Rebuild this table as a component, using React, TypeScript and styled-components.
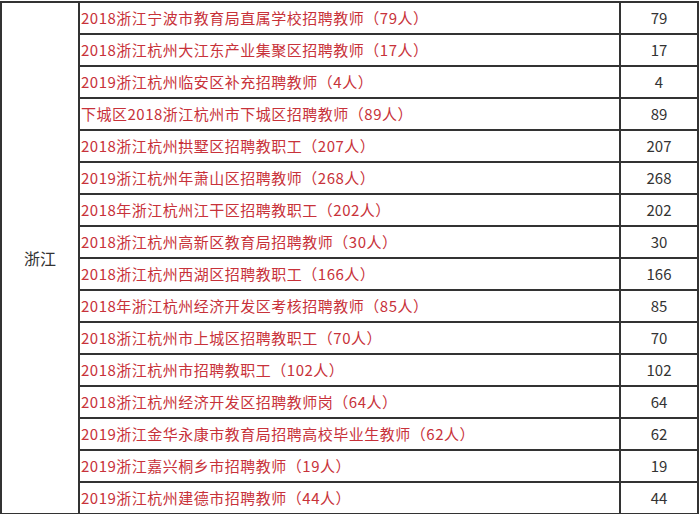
import React, { FC } from 'react'
import styled, { createGlobalStyle } from 'styled-components'

interface Row {
    title: string
    count: number
}

const rows: Row[] = [
    { title: '2018浙江宁波市教育局直属学校招聘教师（79人）', count: 79 },
    { title: '2018浙江杭州大江东产业集聚区招聘教师（17人）', count: 17 },
    { title: '2019浙江杭州临安区补充招聘教师（4人）', count: 4 },
    { title: '下城区2018浙江杭州市下城区招聘教师（89人）', count: 89 },
    { title: '2018浙江杭州拱墅区招聘教职工（207人）', count: 207 },
    { title: '2019浙江杭州年萧山区招聘教师（268人）', count: 268 },
    { title: '2018年浙江杭州江干区招聘教职工（202人）', count: 202 },
    { title: '2018浙江杭州高新区教育局招聘教师（30人）', count: 30 },
    { title: '2018浙江杭州西湖区招聘教职工（166人）', count: 166 },
    { title: '2018年浙江杭州经济开发区考核招聘教师（85人）', count: 85 },
    { title: '2018浙江杭州市上城区招聘教职工（70人）', count: 70 },
    { title: '2018浙江杭州市招聘教职工（102人）', count: 102 },
    { title: '2018浙江杭州经济开发区招聘教师岗（64人）', count: 64 },
    { title: '2019浙江金华永康市教育局招聘高校毕业生教师（62人）', count: 62 },
    { title: '2019浙江嘉兴桐乡市招聘教师（19人）', count: 19 },
    { title: '2019浙江杭州建德市招聘教师（44人）', count: 44 },
]

const App: FC = () => {
    return (
        <>
            <GlobalStyle />
            <Table>
                <Region rows={rows.length}>浙江</Region>
                {rows.map((r) => (
                    <React.Fragment key={r.title}>
                        <TitleCell>
                            <Link href="#">{r.title}</Link>
                        </TitleCell>
                        <CountCell>{r.count}</CountCell>
                    </React.Fragment>
                ))}
            </Table>
        </>
    )
}
export default App

const GlobalStyle = createGlobalStyle`
    body {
        margin: 0;
        background: #fff;
        font-family: "Noto Sans CJK SC", "Liberation Sans", sans-serif;
        font-size: 15px;
    }
`
const Table = styled.div`
    display: grid;
    grid-template-columns: 76px 539px 76px;
    grid-auto-rows: 30px;
    gap: 2px;
    padding: 2px;
    margin-top: 1px;
    width: 695px;
    background: #333;
`
const Cell = styled.div`
    background: #fff;
    display: flex;
    align-items: center;
    white-space: nowrap;
    overflow: hidden;
    line-height: 30px;
`
const Region = styled(Cell)<{ rows: number }>`
    grid-row: 1 / span ${(p) => p.rows};
    grid-column: 1;
    justify-content: center;
    color: #333;
    font-size: 16px;
`
const TitleCell = styled(Cell)`
    grid-column: 2;
    padding-left: 1px;
`
const CountCell = styled(Cell)`
    grid-column: 3;
    justify-content: center;
    color: #333;
`
const Link = styled.a`
    color: #c8323a;
    text-decoration: none;
    letter-spacing: 0.5px;
`
